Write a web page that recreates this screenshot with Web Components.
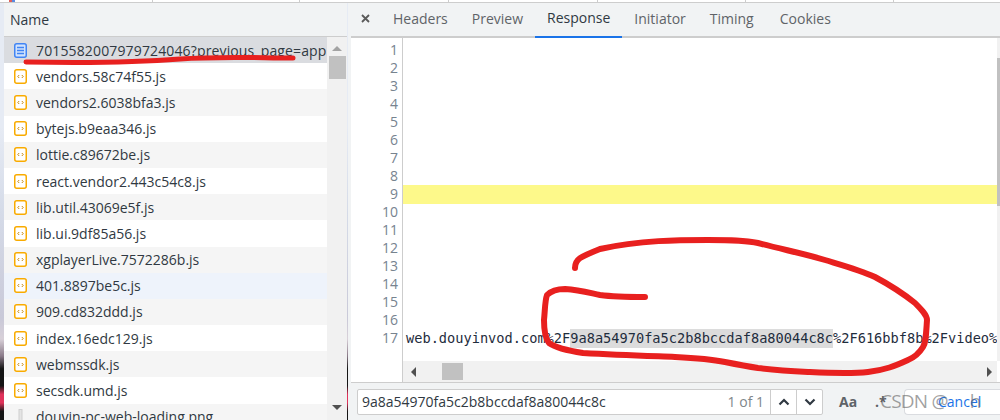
<!DOCTYPE html>
<html>
<head>
<meta charset="utf-8">
<title>Response</title>
<style>
html, body { margin: 0; height: 100%; overflow: hidden; background: #fff; }
body { font-family: "Open Sans", "Noto Sans", sans-serif; }
</style>
</head>
<body>
<devtools-app></devtools-app>

<script>
const fileIcon = (kind) => {
    if (kind === 'doc') {
        return `<svg width="13" height="15" viewBox="0 0 13 15">
            <rect x="0.75" y="0.75" width="11.5" height="13.5" rx="2" fill="#d2e3fc" stroke="#4285f4" stroke-width="1.5"/>
            <path d="M3 4.5h7M3 7.5h7M3 10.5h7" stroke="#4285f4" stroke-width="1.3"/>
        </svg>`;
    }
    if (kind === 'img') {
        return `<svg width="13" height="15" viewBox="0 0 13 15">
            <rect x="5" y="0.5" width="3" height="14" fill="#e4e4e4" stroke="#cfcfcf"/>
        </svg>`;
    }
    return `<svg width="13" height="15" viewBox="0 0 13 15">
        <rect x="0.75" y="0.75" width="11.5" height="13.5" rx="2" fill="#fff" stroke="#f9ab00" stroke-width="1.5"/>
        <path d="M5.2 6 3.800 7.500l1.400 1.500M7.800 6l1.400 1.500-1.400 1.500" fill="none" stroke="#c98a10" stroke-width="1"/>
    </svg>`;
};

class FileRow extends HTMLElement {
    constructor() {
        super();
        this.attachShadow({ mode: 'open' });
    }

    connectedCallback() {
        const kind = this.getAttribute('kind') || 'js';
        this.shadowRoot.innerHTML = `
            <style>
                :host {
                    display: flex;
                    align-items: center;
                    height: 26.2px;
                    flex: none;
                    padding-left: 10px;
                    gap: 9px;
                    background: var(--row-bg, #fff);
                    white-space: nowrap;
                    overflow: hidden;
                    font-size: 14px;
                    color: #303942;
                    letter-spacing: var(--row-track, 0);
                }
                svg { flex: none; display: block; }
            </style>
            ${fileIcon(kind)}<slot></slot>
        `;
    }
}
customElements.define('file-row', FileRow);

class NetworkList extends HTMLElement {
    constructor() {
        super();
        this.attachShadow({ mode: 'open' });
    }

    connectedCallback() {
        const files = [
            ['7015582007979724046?previous_page=app', 'doc', '#dadce0'],
            ['vendors.58c74f55.js', 'js', '#fff'],
            ['vendors2.6038bfa3.js', 'js', '#f5f5f5'],
            ['bytejs.b9eaa346.js', 'js', '#fff'],
            ['lottie.c89672be.js', 'js', '#f5f5f5'],
            ['react.vendor2.443c54c8.js', 'js', '#fff'],
            ['lib.util.43069e5f.js', 'js', '#f5f5f5'],
            ['lib.ui.9df85a56.js', 'js', '#fff'],
            ['xgplayerLive.7572286b.js', 'js', '#f5f5f5'],
            ['401.8897be5c.js', 'js', '#eef3fb'],
            ['909.cd832ddd.js', 'js', '#f5f5f5'],
            ['index.16edc129.js', 'js', '#fff'],
            ['webmssdk.js', 'js', '#f5f5f5'],
            ['secsdk.umd.js', 'js', '#fff'],
            ['douyin-pc-web-loading.png', 'img', '#f5f5f5']
        ];
        const rows = files.map(([name, kind, bg], i) =>
            `<file-row kind="${kind}" style="--row-bg:${bg};${i === 0 ? '--row-track:.14px' : ''}">${name}</file-row>`).join('');
        this.shadowRoot.innerHTML = `
            <style>
                :host {
                    display: flex;
                    flex-direction: column;
                    width: 348px;
                    flex: none;
                    border-left: 4px solid transparent;
                    border-image: linear-gradient(#e6ebf4 0 30%, #d5dbe8 50%, #c9c9d8 75%, #d8d0d8 80%, #8a7a88 84%, #151515 87%, #151515 91%, #e0325a 93%, #e0325a 95%, #151515 97%) 4;
                    box-sizing: border-box;
                    min-height: 0;
                    border-right: 1px solid #cdcdcd;
                }
                .head {
                    height: 33px;
                    flex: none;
                    display: flex;
                    align-items: center;
                    padding-left: 6px;
                    background: #f1f3f4;
                    border-bottom: 1px solid #cdcdcd;
                    font-size: 14px;
                    color: #303942;
                }
                .body { flex: 1; display: flex; min-height: 0; }
                .rows { flex: 1; min-width: 0; display: flex; flex-direction: column; overflow: hidden; }
                .bar {
                    width: 20px;
                    flex: none;
                    background: #f1f1f1;
                    display: flex;
                    flex-direction: column;
                    align-items: center;
                    padding-top: 9px;
                    box-sizing: border-box;
                }
                .up { width: 0; height: 0; border: 5px solid transparent; border-top: 0; border-bottom: 5px solid #a3a3a3; }
                .thumb { width: 17px; height: 23px; background: #c1c1c1; margin-top: 5px; }
                .down { width: 0; height: 0; border: 5px solid transparent; border-bottom: 0; border-top: 5px solid #505050; margin-top: auto; margin-bottom: 10px; }
            </style>
            <div class="head">Name</div>
            <div class="body">
                <div class="rows">${rows}</div>
                <div class="bar"><div class="up"></div><div class="thumb"></div><div class="down"></div></div>
            </div>
        `;
    }
}
customElements.define('network-list', NetworkList);

class TabStrip extends HTMLElement {
    constructor() {
        super();
        this.attachShadow({ mode: 'open' });
    }

    connectedCallback() {
        const tabs = ['Headers', 'Preview', 'Response', 'Initiator', 'Timing', 'Cookies'];
        const items = tabs.map(t => `<div class="tab${t === 'Response' ? ' on' : ''}">${t}</div>`).join('');
        this.shadowRoot.innerHTML = `
            <style>
                :host {
                    display: flex;
                    height: 33px;
                    flex: none;
                    background: #f1f3f4;
                    border-bottom: 2px solid #cdcdcd;
                    font-size: 14px;
                    color: #5f6368;
                }
                .close { width: 30px; height: 30px; flex: none; display: flex; align-items: center; justify-content: center; padding-right: 1px; box-sizing: border-box; }
                .tab { padding: 0 12px 4px; display: flex; align-items: center; box-sizing: border-box; height: 35px; }
                .tab:last-child { margin-left: 2px; }
                .on { color: #303942; border-bottom: 2px solid #1a73e8; }
            </style>
            <div class="close">
                <svg width="9" height="9" viewBox="0 0 9 9"><path d="M1 1l7 7M8 1 1 8" stroke="#5a5a5a" stroke-width="1.8"/></svg>
            </div>
            ${items}
        `;
    }
}
customElements.define('tab-strip', TabStrip);

class CodeView extends HTMLElement {
    constructor() {
        super();
        this.attachShadow({ mode: 'open' });
    }

    connectedCallback() {
        let nums = '';
        for (let i = 1; i <= 17; i++) nums += `<div>${i}</div>`;
        let lines = '';
        for (let i = 1; i <= 17; i++) {
            if (i === 9) lines += '<div class="ln yellow"></div>';
            else if (i === 17) lines += '<div class="ln">web.douyinvod.com%2F<span class="hit">9a8a54970fa5c2b8bccdaf8a80044c8c</span>%2F616bbf8b%2Fvideo%</div>';
            else lines += '<div class="ln"></div>';
        }
        this.shadowRoot.innerHTML = `
            <style>
                :host { display: flex; flex: 1; min-height: 0; background: #fff; overflow: hidden; }
                .gutter {
                    width: 52px;
                    flex: none;
                    box-sizing: border-box;
                    border-right: 1px solid #cdcdcd;
                    padding: 3px 4px 0 0;
                    text-align: right;
                    font-size: 14px;
                    line-height: 18px;
                    color: #77838f;
                }
                .main { flex: 1; min-width: 0; display: flex; flex-direction: column; }
                .scroller { flex: 1; min-height: 0; display: flex; }
                .lines {
                    flex: 1;
                    min-width: 0;
                    overflow: hidden;
                    padding-top: 3px;
                    font-family: "DejaVu Sans Mono", monospace;
                    font-size: 13.65px;
                    line-height: 18px;
                    color: #1f2d3d;
                    white-space: nowrap;
                }
                .ln { height: 18px; padding-left: 3px; }
                .yellow { background: #fdf98a; height: 19px; margin-top: -0.5px; margin-bottom: -0.5px; }
                .hit { background: #dcdcdc; display: inline-block; height: 19px; }
                .vbar { width: 3px; flex: none; background: #f1f1f1; padding-top: 20px; box-sizing: border-box; }
                .vbar div { height: 148px; background: #c1c1c1; }
                .hbar { height: 21px; flex: none; background: #f1f1f1; display: flex; align-items: center; padding: 0 5px 0 8px; margin-right: 3px; }
                .left { width: 0; height: 0; border: 5px solid transparent; border-left: 0; border-right: 5px solid #505050; }
                .thumb { width: 21px; height: 17px; background: #c1c1c1; margin-left: 26px; }
                .right { width: 0; height: 0; border: 5px solid transparent; border-right: 0; border-left: 5px solid #505050; margin-left: auto; }
            </style>
            <div class="gutter">${nums}</div>
            <div class="main">
                <div class="scroller">
                    <div class="lines">${lines}</div>
                    <div class="vbar"><div></div></div>
                </div>
                <div class="hbar"><div class="left"></div><div class="thumb"></div><div class="right"></div></div>
            </div>
        `;
    }
}
customElements.define('code-view', CodeView);

class SearchBar extends HTMLElement {
    constructor() {
        super();
        this.attachShadow({ mode: 'open' });
    }

    connectedCallback() {
        this.shadowRoot.innerHTML = `
            <style>
                :host {
                    display: flex;
                    align-items: center;
                    height: 37px;
                    flex: none;
                    background: #f1f3f4;
                    border-top: 1px solid #cdcdcd;
                    padding-left: 6px;
                    font-size: 14px;
                    color: #303942;
                    position: relative;
                }
                .box {
                    width: 466px;
                    height: 26px;
                    flex: none;
                    display: flex;
                    align-items: center;
                    background: #fff;
                    border: 1px solid #cdcdcd;
                    border-radius: 2px;
                    box-sizing: border-box;
                }
                .query { flex: 1; padding-left: 4px; }
                .count { color: #80868b; padding-right: 6px; }
                .step { width: 25px; height: 100%; flex: none; border-left: 1px solid #cdcdcd; display: flex; align-items: center; justify-content: center; }
                .aa { font-weight: 700; color: #5f6368; margin-left: 16px; width: 36px; }
                .re { color: #5f6368; font-weight: 700; width: 26px; }
                .cancel {
                    margin-left: auto;
                    width: 96px;
                    height: 26px;
                    background: #fff;
                    border: 1px solid #dadce0;
                    border-right: 0;
                    border-radius: 4px 0 0 4px;
                    box-sizing: border-box;
                    display: flex;
                    align-items: center;
                    padding-left: 33px;
                    color: #1a73e8;
                }
                .mark {
                    position: absolute;
                    left: 529px;
                    top: 5px;
                    font-size: 19px;
                    letter-spacing: -.8px;
                    white-space: nowrap;
                    color: rgba(95, 95, 95, .6);
                }
                .mark b { font-weight: 400; margin-left: 22px; }
            </style>
            <div class="box">
                <div class="query">9a8a54970fa5c2b8bccdaf8a80044c8c</div>
                <div class="count">1 of 1</div>
                <div class="step"><svg width="12" height="8" viewBox="0 0 12 8"><path d="M1.500 6.500 6 2l4.500 4.500" fill="none" stroke="#303942" stroke-width="2.200"/></svg></div>
                <div class="step"><svg width="12" height="8" viewBox="0 0 12 8"><path d="M1.500 1.500 6 6l4.500-4.500" fill="none" stroke="#303942" stroke-width="2.200"/></svg></div>
            </div>
            <div class="aa">Aa</div>
            <div class="re">.*</div>
            <div class="cancel">Cancel</div>
            <div class="mark">CSDN @<b>h</b></div>
        `;
    }
}
customElements.define('search-bar', SearchBar);

class DevtoolsApp extends HTMLElement {
    constructor() {
        super();
        this.attachShadow({ mode: 'open' });
    }

    connectedCallback() {
        this.shadowRoot.innerHTML = `
            <style>
                :host {
                    display: flex;
                    flex-direction: column;
                    width: 1000px;
                    height: 420px;
                    position: relative;
                    overflow: hidden;
                    background: #fff;
                }
                .top {
                    height: 3px;
                    flex: none;
                    box-sizing: border-box;
                    border-bottom: 1px solid #cdcdcd;
                    background:
                        linear-gradient(90deg, transparent 9px, #e0605a 9px 12px, #5a8ae0 12px 15px, transparent 15px 152px, #cdcdcd 152px 153px, transparent 153px 299px, #cdcdcd 299px 300px, transparent 300px 448px, #cdcdcd 448px 449px, transparent 449px 597px, #cdcdcd 597px 598px, transparent 598px 745px, #cdcdcd 745px 746px, transparent 746px 893px, #cdcdcd 893px 894px, transparent 894px);
                }
                .split { flex: 1; display: flex; min-height: 0; }
                .right {
                    flex: 1;
                    min-width: 0;
                    display: flex;
                    flex-direction: column;
                    border-left: 3px solid #f1f3f4;
                }
                svg.ink { position: absolute; left: 0; top: 0; pointer-events: none; }
            </style>
            <div class="top"></div>
            <div class="split">
                <network-list></network-list>
                <div class="right">
                    <tab-strip></tab-strip>
                    <code-view></code-view>
                    <search-bar></search-bar>
                </div>
            </div>
            <svg class="ink" width="1000" height="420" viewBox="0 0 1000 420" fill="none" stroke="#e8201f" stroke-linecap="round" stroke-linejoin="round">
                <path stroke-width="5" d="M26 62C80 63 130 63 180 59C220 56 260 58 293 58"/>
                <path stroke-width="6" d="M575 268C575 259 580 257 600 249C640 240 680 240 708 240C730 240 745 240 758 243C785 250 805 254 825 260C845 266 860 270 875 277C890 285 905 295 915 303C922 310 927 315 927 320C926 335 926 342 923 347C918 355 913 358 908 360C895 366 885 370 868 372C850 374 830 373 808 372C790 371 775 370 758 368C745 366 735 364 725 362C710 359 695 358 675 357C650 356 620 355 583 353C570 351 556 348 549 343C545 338 544 330 544 320C545 310 545 300 547 295C552 290 560 289 565 289C580 290 590 293 600 295C615 297 630 297 645 297"/>
            </svg>
        `;
    }
}
customElements.define('devtools-app', DevtoolsApp);
</script>
</body>
</html>
